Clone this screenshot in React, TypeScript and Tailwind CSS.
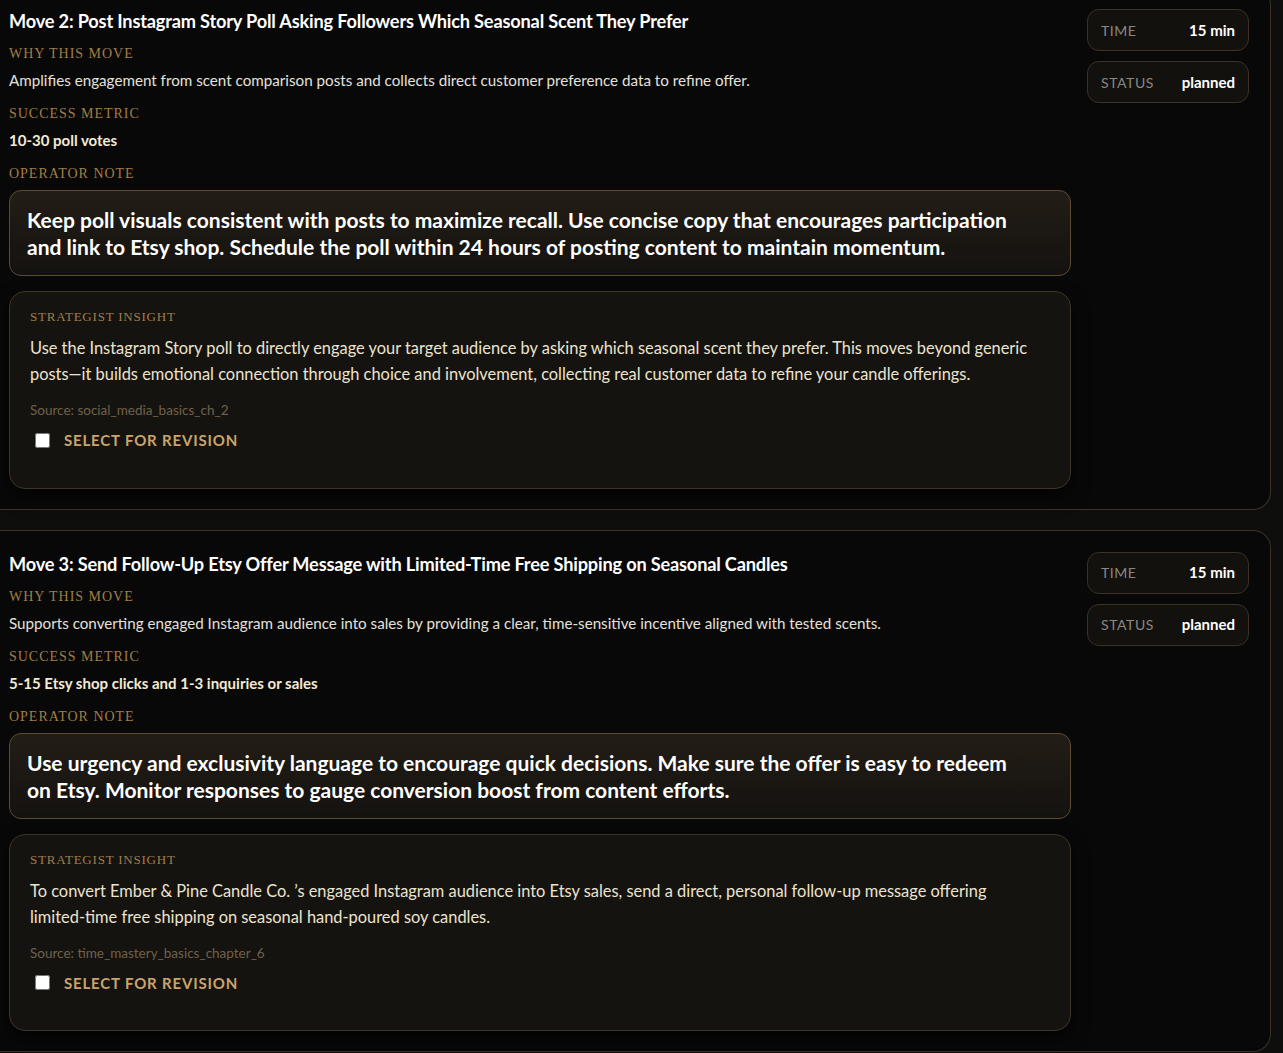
const moves = [
  {
    title: "Move 2: Post Instagram Story Poll Asking Followers Which Seasonal Scent They Prefer",
    why: "Amplifies engagement from scent comparison posts and collects direct customer preference data to refine offer.",
    metric: "10-30 poll votes",
    note: "Keep poll visuals consistent with posts to maximize recall. Use concise copy that encourages participation and link to Etsy shop. Schedule the poll within 24 hours of posting content to maintain momentum.",
    insight:
      "Use the Instagram Story poll to directly engage your target audience by asking which seasonal scent they prefer. This moves beyond generic posts\u2014it builds emotional connection through choice and involvement, collecting real customer data to refine your candle offerings.",
    source: "social_media_basics_ch_2",
    time: "15 min",
    status: "planned",
  },
  {
    title: "Move 3: Send Follow-Up Etsy Offer Message with Limited-Time Free Shipping on Seasonal Candles",
    why: "Supports converting engaged Instagram audience into sales by providing a clear, time-sensitive incentive aligned with tested scents.",
    metric: "5-15 Etsy shop clicks and 1-3 inquiries or sales",
    note: "Use urgency and exclusivity language to encourage quick decisions. Make sure the offer is easy to redeem on Etsy. Monitor responses to gauge conversion boost from content efforts.",
    insight:
      "To convert Ember & Pine Candle Co. \u2019s engaged Instagram audience into Etsy sales, send a direct, personal follow-up message offering limited-time free shipping on seasonal hand-poured soy candles.",
    source: "time_mastery_basics_chapter_6",
    time: "15 min",
    status: "planned",
  },
]

const sans = "font-['Lato','Open_Sans',sans-serif]"

function Label({ children }: { children: string }) {
  return (
    <div className="font-['Liberation_Serif',serif] text-[14px] uppercase tracking-[0.07em] text-[#a17e45] leading-5">
      {children}
    </div>
  )
}

function Stat({ label, value }: { label: string; value: string }) {
  return (
    <div className="h-[42px] flex items-center justify-between px-[13px] rounded-xl border border-[#3a3225] bg-[#12110e]">
      <span className="text-[14px] uppercase tracking-[0.04em] text-[#8a8782]">{label}</span>
      <span className="text-[15px] font-bold text-white">{value}</span>
    </div>
  )
}

function MoveCard({ m }: { m: (typeof moves)[number] }) {
  return (
    <section className="flex gap-4 pl-[9px] pr-[21px] pt-[22px] pb-[20px] border-y border-r border-[#3a3225] rounded-r-[18px] bg-[#080808]">
      <div className="w-[1062px] shrink-0">
        <h2 className="text-[18.2px] font-bold text-white leading-[22px] tracking-[-0.01em]">{m.title}</h2>
        <div className="mt-[12px]">
          <Label>WHY THIS MOVE</Label>
        </div>
        <p className="mt-[6px] text-[15.2px] text-[#e4e1dc] leading-5">{m.why}</p>
        <div className="mt-[14px]">
          <Label>SUCCESS METRIC</Label>
        </div>
        <p className="mt-[6px] text-[15px] font-bold text-[#f4ead3] leading-5">{m.metric}</p>
        <div className="mt-[14px]">
          <Label>OPERATOR NOTE</Label>
        </div>
        <div className="mt-[6px] rounded-xl border border-[#5b4b33] bg-gradient-to-b from-[#231d15] to-[#141210] pl-[17px] pr-[48px] py-[15px]">
          <p className="text-[21px] font-bold text-white leading-[27px]">{m.note}</p>
        </div>
        <div className="mt-[15px] rounded-2xl border border-[#3d3527] bg-[#15130f] pl-5 pr-[35px] pt-[15px] pb-[36px] shadow-[0_8px_18px_rgba(0,0,0,0.6)]">
          <div className="font-['Liberation_Serif',serif] text-[13px] uppercase tracking-[0.06em] text-[#a07e4b] leading-5">
            STRATEGIST INSIGHT
          </div>
          <p className="mt-[8px] text-[16.4px] text-[#ece3cf] leading-[26px]">{m.insight}</p>
          <p className="mt-[13px] text-[13.5px] text-[#6f614b] leading-5">Source: {m.source}</p>
          <label className="mt-[9px] flex items-center gap-[14px] pl-[5px]">
            <input type="checkbox" className="w-[15px] h-[15px] accent-[#c9a36a]" />
            <span className="text-[15px] font-bold uppercase tracking-[0.055em] text-[#caa46c]">Select for revision</span>
          </label>
        </div>
      </div>
      <div className="w-[162px] shrink-0 flex flex-col gap-[10px] -mt-[1px]">
        <Stat label="Time" value={m.time} />
        <Stat label="Status" value={m.status} />
      </div>
    </section>
  )
}

export default function App() {
  return (
    <div className={`min-h-screen bg-[#0e0e0d] ${sans} overflow-hidden`}>
      <div className="w-[1271px] -mt-[13px] flex flex-col gap-5">
        {moves.map((m) => (
          <MoveCard key={m.title} m={m} />
        ))}
      </div>
    </div>
  )
}
